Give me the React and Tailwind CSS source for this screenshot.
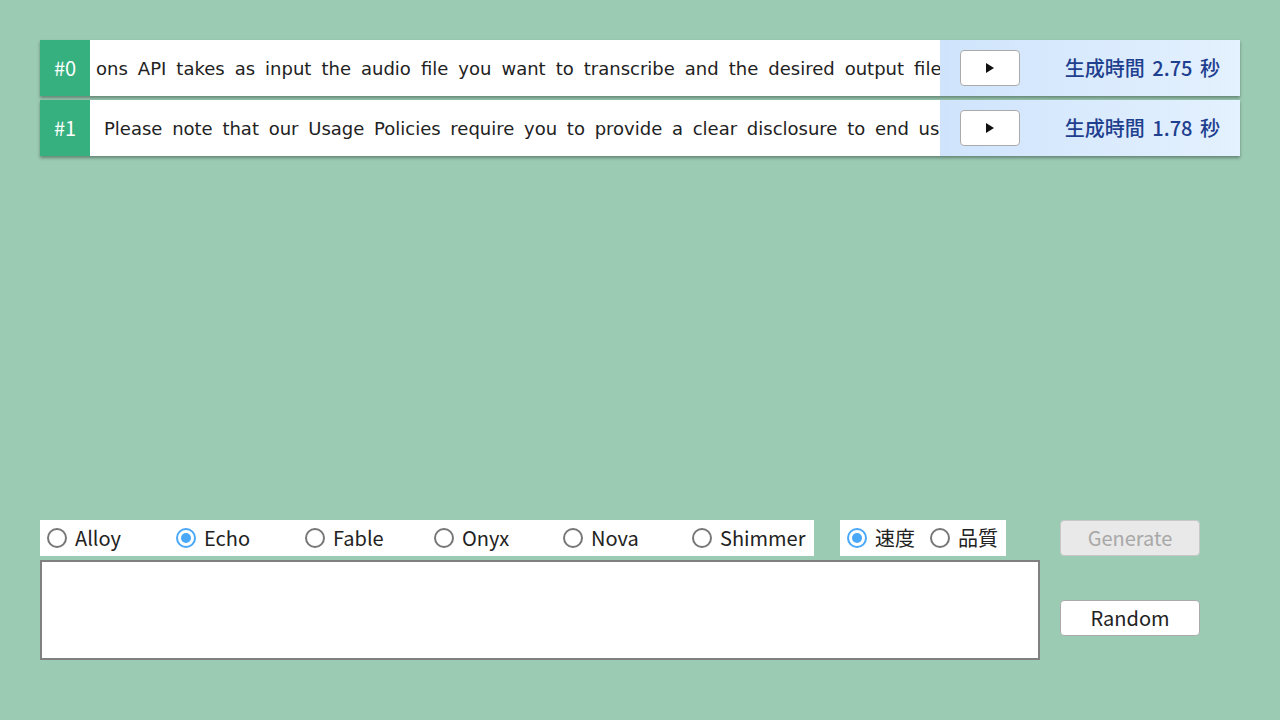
import React from "react";

const cjk = { fontFamily: '"Noto Sans CJK JP", "Noto Sans", sans-serif' };
const dv = { fontFamily: '"DejaVu Sans", sans-serif' };

function Row({ id, text, offset, ws, time }) {
  return (
    <div className="flex h-[56px] w-full shadow-[0_2px_3px_rgba(0,0,0,0.35)]">
      <div className="w-[50px] shrink-0 bg-[#36b07f] text-white flex items-center justify-center text-[20px]" style={cjk}>
        {id}
      </div>
      <div className="flex-1 bg-white overflow-hidden flex items-center">
        <div className="whitespace-nowrap text-[18px] text-[#222]" style={{ ...dv, marginLeft: offset, wordSpacing: ws }}>
          {text}
        </div>
      </div>
      <div className="w-[300px] shrink-0 flex items-center bg-gradient-to-r from-[#cfe4fc] to-[#e4f1fe] pl-[20px] pr-[20px]">
        <button className="w-[60px] h-[36px] bg-white border border-[#aaa] rounded-[4px] flex items-center justify-center">
          <svg width="10" height="12" viewBox="0 0 10 12"><path d="M1 1 L9 6 L1 11 Z" fill="#111" /></svg>
        </button>
        <div className="flex-1 text-right text-[20px] font-medium text-[#1f3f8f] [word-spacing:3px] whitespace-nowrap" style={cjk}>
          {time}
        </div>
      </div>
    </div>
  );
}

function Radio({ checked, label, w }) {
  return (
    <div className={`flex items-center ${w}`}>
      {checked ? (
        <span className="w-[20px] h-[20px] rounded-full border-2 border-[#4aa8f8] flex items-center justify-center mr-[8px] shrink-0">
          <span className="w-[10px] h-[10px] rounded-full bg-[#4aa8f8]" />
        </span>
      ) : (
        <span className="w-[20px] h-[20px] rounded-full border-2 border-[#777] mr-[8px] shrink-0" />
      )}
      <span className="text-[20px] text-[#222]" style={cjk}>{label}</span>
    </div>
  );
}

export default function App() {
  return (
    <div className="w-[1280px] h-[720px] bg-[#9bcbb3] flex flex-col justify-between px-[40px] pt-[40px] pb-[60px]">
      <div className="flex flex-col gap-[4px]">
        <Row
          id="#0"
          offset="6px"
          ws="4.3px"
          text="ons API takes as input the audio file you want to transcribe and the desired output file format for the transcription of the audio."
          time="生成時間 2.75 秒"
        />
        <Row
          id="#1"
          offset="14px"
          ws="4px"
          text="Please note that our Usage Policies require you to provide a clear disclosure to end users that the TTS voice they are hearing is AI-generated."
          time="生成時間 1.78 秒"
        />
      </div>
      <div className="flex gap-[20px]">
        <div className="flex flex-col gap-[4px] w-[1000px]">
          <div className="flex gap-[26px]">
            <div className="flex h-[36px] bg-white items-center pl-[7px] w-[774px]">
              <Radio checked={false} label="Alloy" w="w-[129px]" />
              <Radio checked={true} label="Echo" w="w-[129px]" />
              <Radio checked={false} label="Fable" w="w-[129px]" />
              <Radio checked={false} label="Onyx" w="w-[129px]" />
              <Radio checked={false} label="Nova" w="w-[129px]" />
              <Radio checked={false} label="Shimmer" w="w-[100px]" />
            </div>
            <div className="flex h-[36px] bg-white items-center pl-[7px] w-[166px]">
              <Radio checked={true} label="速度" w="w-[83px]" />
              <Radio checked={false} label="品質" w="w-[70px]" />
            </div>
          </div>
          <textarea className="w-[1000px] h-[100px] border-2 border-[#808080] bg-white resize-none outline-none" />
        </div>
        <div className="flex flex-col gap-[44px]">
          <button disabled className="w-[140px] h-[36px] bg-[#e9e9e9] border border-[#c8c8c8] rounded-[4px] text-[20px] text-[#a8a8a8]" style={cjk}>
            Generate
          </button>
          <button className="w-[140px] h-[36px] bg-white border border-[#aaa] rounded-[4px] text-[20px] text-[#222]" style={cjk}>
            Random
          </button>
        </div>
      </div>
    </div>
  );
}
